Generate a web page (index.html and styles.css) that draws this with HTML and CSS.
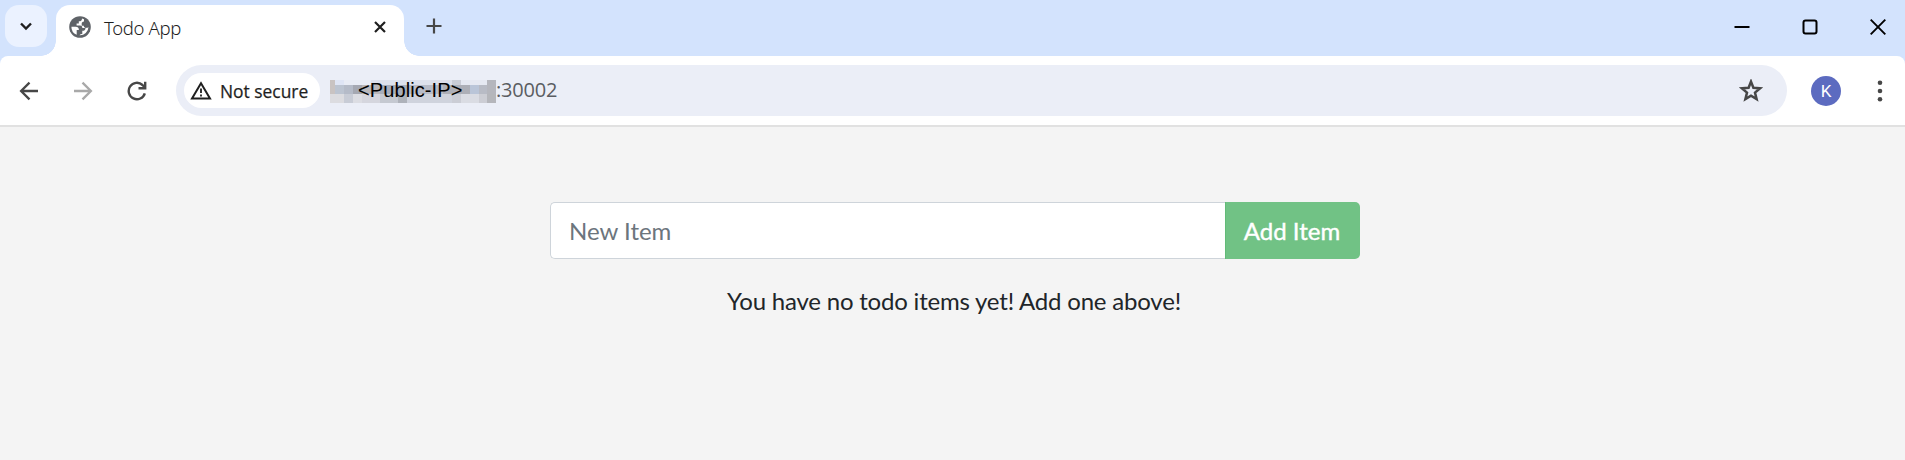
FILE: index.html
```html
<!DOCTYPE html>
<html lang="en">
<head>
<meta charset="utf-8">
<title>Todo App</title>
<link rel="stylesheet" href="styles.css">
</head>
<body>
<header class="browser">
  <div class="tabstrip">
    <button class="tab-search" aria-label="Search tabs"><svg width="14" height="9" viewBox="0 0 14 9"><path d="M2 1.5l5 5 5-5" fill="none" stroke="#1f1f1f" stroke-width="2.4"/></svg></button>
    <div class="tab">
      <svg class="globe" width="22" height="22" viewBox="0 0 22 22"><circle cx="11" cy="11" r="10.800" fill="#5f6368"/><path d="M13 2.500C13 4.500 12 5.300 9.800 5.300V7.500H7.600V9.600H11c1.800 0 2.300.9 2.300 2.300h3.200c0 2-1.100 2.800-3.200 2.800v3.200c-1.200 0-2.300.4-2.800 1.300A8.500 8.500 0 0 0 19.500 11c-.6.700-1.500.9-2.500.9-1.400 0-2.200-.8-2.200-2.200h-2.100V7.500c0-1.200.8-1.900 2.300-2.100V3.300zM2.400 10.700h4.300c2 0 3.200 1.100 3.200 3.200H7.700v4.900A8.600 8.600 0 0 1 2.400 10.700z" fill="#fff"/></svg>
      <span class="tab-title">Todo App</span>
      <svg class="tab-close" width="12" height="12" viewBox="0 0 12 12"><path d="M1 1l10 10M11 1L1 11" stroke="#1f1f1f" stroke-width="2.200"/></svg>
    </div>
    <svg class="new-tab" width="16" height="16" viewBox="0 0 16 16"><path d="M8 .5v15M.5 8h15" stroke="#474747" stroke-width="2.200"/></svg>
    <div class="window-controls">
      <svg width="16" height="16" viewBox="0 0 16 16"><path d="M.5 8h15" stroke="#000" stroke-width="2"/></svg>
      <svg width="16" height="16" viewBox="0 0 16 16"><rect x="1.500" y="1.500" width="13" height="13" rx="2" fill="none" stroke="#000" stroke-width="2"/></svg>
      <svg width="16" height="16" viewBox="0 0 16 16"><path d="M.7.7l14.600 14.600M15.300.7L.7 15.300" stroke="#000" stroke-width="1.900"/></svg>
    </div>
  </div>
  <div class="toolbar">
    <div class="nav">
      <svg width="20" height="20" viewBox="0 0 20 20"><path d="M19 10H2.500M10.500 1.600L2.100 10l8.400 8.400" fill="none" stroke="#474747" stroke-width="2.300"/></svg>
      <svg width="20" height="20" viewBox="0 0 20 20"><path d="M1 10h16.500M9.500 1.600l8.400 8.400-8.400 8.400" fill="none" stroke="#a9a9a9" stroke-width="2.300"/></svg>
      <svg width="20" height="20" viewBox="0 0 20 20"><path d="M17.800 12.300A8.200 8.200 0 1 1 15.500 4l2.300 2.500M18.200.7v6.500H11.500" fill="none" stroke="#474747" stroke-width="2.400"/></svg>
    </div>
    <div class="omnibox">
      <div class="chip">
        <svg width="22" height="19" viewBox="0 0 22 19"><path d="M11 2.200L20 17.500H2z" fill="none" stroke="#1f1f1f" stroke-width="2"/><path d="M11 7.500v4.500M11 13.500v2" stroke="#1f1f1f" stroke-width="1.800"/></svg>
        <span>Not secure</span>
      </div>
      <div class="url">
        <span class="masked"><svg class="mosaic" width="166" height="23" viewBox="0 0 166 23" shape-rendering="crispEdges">
          <path fill="#c9c3c2" d="M0 0h5v14H0z"/><path fill="#dfe5f5" d="M5 0h9v5H5z"/><path fill="#e9ecf5" d="M14 0h27v5H14z"/><path fill="#dde1ec" d="M41 0h60v5H41z"/><path fill="#dcdfea" d="M101 0h21v5h-21z"/><path fill="#c9ccd6" d="M122 0h9v5h-9z"/><path fill="#e6e9f2" d="M131 0h26v5h-26z"/><path fill="#b5b6bd" d="M157 0h9v14h-9z"/>
          <path fill="#bcc4d1" d="M5 5h9v9H5z"/><path fill="#b5bbc8" d="M14 5h9v9h-9z"/><path fill="#a5a8b2" d="M23 5h9v9h-9z"/><path fill="#b9b7ba" d="M32 5h18v9H32z"/><path fill="#a7adba" d="M50 5h27v9H50z"/><path fill="#b8bcc8" d="M77 5h36v9H77z"/><path fill="#adafb7" d="M113 5h27v9h-27z"/><path fill="#bac5d8" d="M140 5h9v9h-9z"/><path fill="#b8bbc5" d="M149 5h8v9h-8z"/>
          <path fill="#dcdce0" d="M0 14h14v9H0z"/><path fill="#c8ccd6" d="M14 14h9v9h-9z"/><path fill="#dcdde3" d="M23 14h9v9h-9z"/><path fill="#d5d6de" d="M32 14h18v9H32z"/><path fill="#c5c9d1" d="M50 14h18v9H50z"/><path fill="#aeb2ba" d="M68 14h9v9h-9z"/><path fill="#cfd3dd" d="M77 14h45v9H77z"/><path fill="#cbcdd5" d="M122 14h9v9h-9z"/><path fill="#dadce3" d="M131 14h18v9h-18z"/><path fill="#cccdd4" d="M149 14h8v9h-8z"/><path fill="#b5b6bb" d="M157 14h9v9h-9z"/>
          </svg><span class="ip">&lt;Public-IP&gt;</span></span><span class="port">:30002</span>
      </div>
      <svg class="star" width="24" height="23" viewBox="0 0 24 23"><path d="M12 2.600l2.400 6.200 6.700.5-5.100 4.300 1.600 6.500-5.600-3.500-5.600 3.500 1.600-6.500-5.100-4.300 6.700-.5z" fill="none" stroke="#474747" stroke-width="2.500"/></svg>
    </div>
    <div class="avatar">K</div>
    <svg class="menu" width="6" height="22" viewBox="0 0 6 22"><g fill="#474747"><circle cx="3" cy="2.700" r="2.300"/><circle cx="3" cy="11" r="2.300"/><circle cx="3" cy="19.300" r="2.300"/></g></svg>
  </div>
</header>
<main class="page">
  <form class="add-form">
    <input class="item-input" type="text" placeholder="New Item" aria-label="New item">
    <button class="add-button" type="button">Add Item</button>
  </form>
  <p class="empty">You have no todo items yet! Add one above!</p>
</main>
</body>
</html>
```
FILE: styles.css
```css
* { box-sizing: border-box; }
body { margin: 0; height: 460px; overflow: hidden; background: #f4f4f4; font-family: Lato, sans-serif; }
svg { display: block; flex: none; }
button { border: 0; padding: 0; font-family: inherit; }
.browser { font-family: "Open Sans", sans-serif; background: #d3e3fd; }
.tabstrip { display: flex; height: 56px; padding: 5px 0 0 5px; }
.tab-search { display: flex; align-items: center; justify-content: center; width: 42px; height: 42px; border-radius: 14px; background: #ebf2ff; }
.tab { position: relative; display: flex; align-items: center; width: 348px; height: 51px; margin-left: 9px; padding: 0 18px 8px 13px; background: #fff; border-radius: 14px 14px 0 0; }
.tab::before, .tab::after { content: ""; position: absolute; bottom: 0; width: 15px; height: 15px; }
.tab::before { left: -15px; background: radial-gradient(circle at 0 0, transparent 14.500px, #fff 15px); }
.tab::after { right: -15px; background: radial-gradient(circle at 100% 0, transparent 14.500px, #fff 15px); }
.tab-title { margin: 3px auto 0 13px; font: 300 18.500px/24px "Noto Sans", sans-serif; letter-spacing: -0.35px; color: #1f1f1f; }
.new-tab { margin: 13px 0 0 22px; }
.window-controls { display: flex; gap: 52px; margin: 14px 19px 0 auto; }
.toolbar { display: flex; align-items: center; height: 71px; padding: 0 22px 0 19px; background: #fff; border-bottom: 2px solid #e1e1e1; border-radius: 8px 8px 0 0; }
.nav { display: flex; gap: 34px; }
.omnibox { display: flex; align-items: center; width: 1611px; height: 51px; margin: 0 24px 0 29px; padding: 0 24px 0 8px; border-radius: 26px; background: #ebeef7; }
.chip { display: flex; align-items: center; gap: 8px; width: 136px; height: 35px; padding-left: 6px; border-radius: 18px; background: #fff; color: #1f1f1f; font-size: 17.400px; -webkit-text-stroke: 0.25px #1f1f1f; white-space: nowrap; }
.url { display: flex; align-items: center; margin: 2px auto 0 10px; }
.masked { display: grid; align-items: center; }
.mosaic, .ip { grid-area: 1 / 1; }
.ip { margin-top: -3px; padding-left: 28px; font: 20px/23px "Liberation Sans", sans-serif; letter-spacing: 0.1px; color: #000; }
.port { margin-top: -3px; font-size: 20px; line-height: 24px; letter-spacing: -0.2px; color: #5a5d62; }
.avatar { width: 30px; height: 30px; border-radius: 50%; background: #5c6bc0; color: #fff; font: 17px/30px Roboto, sans-serif; text-align: center; }
.menu { margin-left: auto; }
.page { padding-top: 75px; }
.add-form { display: flex; width: 810px; height: 57px; margin: 0 0 0 550px; }
.item-input { flex: 1; min-width: 0; padding: 0 18px; border: 1px solid #ced4da; border-right: 0; border-radius: 5px 0 0 5px; background: #fff; font: 24px/36px Lato, sans-serif; }
.item-input::placeholder { color: #6c757d; opacity: 1; }
.add-button { width: 135px; padding-right: 2px; border-left: 1px solid #62bb78; border-radius: 0 5px 5px 0; background: #71c285; color: #fff; font-size: 24px; -webkit-text-stroke: 0.4px #fff; }
.empty { margin: 24px 0 0; padding-left: 3px; text-align: center; font-size: 24px; line-height: 36px; letter-spacing: -0.2px; color: #212529; }
```
